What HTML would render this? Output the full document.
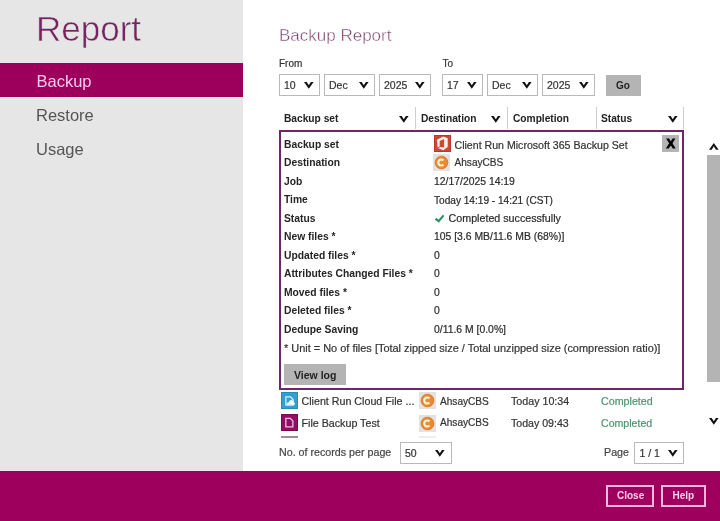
<!DOCTYPE html>
<html><head><meta charset="utf-8"><style>
html,body{margin:0;padding:0;width:720px;height:521px;overflow:hidden;background:#fff;position:relative}
.t{position:absolute;white-space:pre;font-family:"Liberation Sans",sans-serif}
#w{position:absolute;left:0;top:0;width:720px;height:521px;will-change:transform}
.a{position:absolute;display:block}
</style></head><body><div id="w">
<div class="a" style="left:0px;top:0px;width:243px;height:471px;background:#e6e6e6"></div>
<div class="t" style="left:36px;top:11px;font-size:35px;line-height:35px;color:#76235f;font-weight:400;-webkit-text-stroke:0.55px #e6e6e6">Report</div>
<div class="a" style="left:0px;top:63px;width:243px;height:34px;background:#9c005c"></div>
<div class="t" style="left:36.5px;top:73px;font-size:16.5px;line-height:16.5px;color:#f9c8ea;font-weight:400;">Backup</div>
<div class="t" style="left:36px;top:107px;font-size:16.5px;line-height:16.5px;color:#555;font-weight:400;">Restore</div>
<div class="t" style="left:36px;top:141px;font-size:16.5px;line-height:16.5px;color:#555;font-weight:400;">Usage</div>
<div class="t" style="left:279px;top:27px;font-size:17px;line-height:17px;color:#7c4272;font-weight:400;-webkit-text-stroke:0.4px #fff">Backup Report</div>
<div class="t" style="left:279px;top:59px;font-size:10px;line-height:10px;color:#333;font-weight:400;-webkit-text-stroke:0.2px #333">From</div>
<div class="t" style="left:442.5px;top:59px;font-size:10px;line-height:10px;color:#333;font-weight:400;-webkit-text-stroke:0.2px #333">To</div>
<div class="a" style="left:279px;top:74px;width:41px;height:21.5px;border:1px solid #b9b9b9;box-sizing:border-box;background:#fff"></div>
<div class="t" style="left:284px;top:80px;font-size:10.5px;line-height:10.5px;color:#333;font-weight:400;-webkit-text-stroke:0.2px #333">10</div>
<svg class="a" style="left:304.20px;top:82.10px" width="10.6" height="7.8"><path d="M0 0 H2.7 L4.8 3.13 L6.8999999999999995 0 H9.6 L4.8 6.8 Z" fill="#111"/></svg>
<div class="a" style="left:324px;top:74px;width:51px;height:21.5px;border:1px solid #b9b9b9;box-sizing:border-box;background:#fff"></div>
<div class="t" style="left:329px;top:80px;font-size:10.5px;line-height:10.5px;color:#333;font-weight:400;-webkit-text-stroke:0.2px #333">Dec</div>
<svg class="a" style="left:359.20px;top:82.10px" width="10.6" height="7.8"><path d="M0 0 H2.7 L4.8 3.13 L6.8999999999999995 0 H9.6 L4.8 6.8 Z" fill="#111"/></svg>
<div class="a" style="left:379px;top:74px;width:52px;height:21.5px;border:1px solid #b9b9b9;box-sizing:border-box;background:#fff"></div>
<div class="t" style="left:384px;top:80px;font-size:10.5px;line-height:10.5px;color:#333;font-weight:400;-webkit-text-stroke:0.2px #333">2025</div>
<svg class="a" style="left:415.20px;top:82.10px" width="10.6" height="7.8"><path d="M0 0 H2.7 L4.8 3.13 L6.8999999999999995 0 H9.6 L4.8 6.8 Z" fill="#111"/></svg>
<div class="a" style="left:442px;top:74px;width:41px;height:21.5px;border:1px solid #b9b9b9;box-sizing:border-box;background:#fff"></div>
<div class="t" style="left:447px;top:80px;font-size:10.5px;line-height:10.5px;color:#333;font-weight:400;-webkit-text-stroke:0.2px #333">17</div>
<svg class="a" style="left:467.20px;top:82.10px" width="10.6" height="7.8"><path d="M0 0 H2.7 L4.8 3.13 L6.8999999999999995 0 H9.6 L4.8 6.8 Z" fill="#111"/></svg>
<div class="a" style="left:487px;top:74px;width:51px;height:21.5px;border:1px solid #b9b9b9;box-sizing:border-box;background:#fff"></div>
<div class="t" style="left:492px;top:80px;font-size:10.5px;line-height:10.5px;color:#333;font-weight:400;-webkit-text-stroke:0.2px #333">Dec</div>
<svg class="a" style="left:522.20px;top:82.10px" width="10.6" height="7.8"><path d="M0 0 H2.7 L4.8 3.13 L6.8999999999999995 0 H9.6 L4.8 6.8 Z" fill="#111"/></svg>
<div class="a" style="left:542px;top:74px;width:53px;height:21.5px;border:1px solid #b9b9b9;box-sizing:border-box;background:#fff"></div>
<div class="t" style="left:547px;top:80px;font-size:10.5px;line-height:10.5px;color:#333;font-weight:400;-webkit-text-stroke:0.2px #333">2025</div>
<svg class="a" style="left:579.20px;top:82.10px" width="10.6" height="7.8"><path d="M0 0 H2.7 L4.8 3.13 L6.8999999999999995 0 H9.6 L4.8 6.8 Z" fill="#111"/></svg>
<div class="a" style="left:606px;top:75px;width:35px;height:21px;background:#b4b4b4"></div>
<div class="t" style="left:616px;top:81px;font-size:10px;line-height:10px;color:#222;font-weight:700;">Go</div>
<div class="t" style="left:284px;top:114px;font-size:10.2px;line-height:10.2px;color:#222;font-weight:700;">Backup set</div>
<svg class="a" style="left:399.20px;top:115.60px" width="10.6" height="7.8"><path d="M0 0 H2.7 L4.8 3.13 L6.8999999999999995 0 H9.6 L4.8 6.8 Z" fill="#111"/></svg>
<div class="a" style="left:414.5px;top:107px;width:1.2px;height:22px;background:#cfcfcf"></div>
<div class="t" style="left:421px;top:114px;font-size:10.2px;line-height:10.2px;color:#222;font-weight:700;">Destination</div>
<svg class="a" style="left:491.20px;top:115.60px" width="10.6" height="7.8"><path d="M0 0 H2.7 L4.8 3.13 L6.8999999999999995 0 H9.6 L4.8 6.8 Z" fill="#111"/></svg>
<div class="a" style="left:507px;top:107px;width:1.2px;height:22px;background:#cfcfcf"></div>
<div class="t" style="left:513px;top:114px;font-size:10.2px;line-height:10.2px;color:#222;font-weight:700;">Completion</div>
<div class="a" style="left:595.5px;top:107px;width:1.2px;height:22px;background:#cfcfcf"></div>
<div class="t" style="left:601px;top:114px;font-size:10.2px;line-height:10.2px;color:#222;font-weight:700;">Status</div>
<svg class="a" style="left:668.20px;top:115.60px" width="10.6" height="7.8"><path d="M0 0 H2.7 L4.8 3.13 L6.8999999999999995 0 H9.6 L4.8 6.8 Z" fill="#111"/></svg>
<div class="a" style="left:683px;top:107px;width:1.2px;height:22px;background:#cfcfcf"></div>
<div class="a" style="left:279px;top:130px;width:405px;height:260px;border:2px solid #70246a;box-sizing:border-box;background:#fff"></div>
<div class="t" style="left:284px;top:140px;font-size:10.3px;line-height:10.3px;color:#252525;font-weight:700;">Backup set</div>
<div class="t" style="left:284px;top:158px;font-size:10.3px;line-height:10.3px;color:#252525;font-weight:700;">Destination</div>
<div class="t" style="left:284px;top:177px;font-size:10.3px;line-height:10.3px;color:#252525;font-weight:700;">Job</div>
<div class="t" style="left:434px;top:177px;font-size:10.4px;line-height:10.4px;color:#2b2b2b;font-weight:400;-webkit-text-stroke:0.2px #2b2b2b">12/17/2025 14:19</div>
<div class="t" style="left:284px;top:195px;font-size:10.3px;line-height:10.3px;color:#252525;font-weight:700;">Time</div>
<div class="t" style="left:434px;top:196px;font-size:10.1px;line-height:10.1px;color:#2b2b2b;font-weight:400;-webkit-text-stroke:0.2px #2b2b2b">Today 14:19 - 14:21 (CST)</div>
<div class="t" style="left:284px;top:214px;font-size:10.3px;line-height:10.3px;color:#252525;font-weight:700;">Status</div>
<div class="t" style="left:284px;top:232px;font-size:10.3px;line-height:10.3px;color:#252525;font-weight:700;">New files *</div>
<div class="t" style="left:434px;top:232px;font-size:10.4px;line-height:10.4px;color:#2b2b2b;font-weight:400;-webkit-text-stroke:0.2px #2b2b2b">105 [3.6 MB/11.6 MB (68%)]</div>
<div class="t" style="left:284px;top:251px;font-size:10.3px;line-height:10.3px;color:#252525;font-weight:700;">Updated files *</div>
<div class="t" style="left:434px;top:251px;font-size:10.4px;line-height:10.4px;color:#2b2b2b;font-weight:400;-webkit-text-stroke:0.2px #2b2b2b">0</div>
<div class="t" style="left:284px;top:269px;font-size:10.3px;line-height:10.3px;color:#252525;font-weight:700;">Attributes Changed Files *</div>
<div class="t" style="left:434px;top:269px;font-size:10.4px;line-height:10.4px;color:#2b2b2b;font-weight:400;-webkit-text-stroke:0.2px #2b2b2b">0</div>
<div class="t" style="left:284px;top:288px;font-size:10.3px;line-height:10.3px;color:#252525;font-weight:700;">Moved files *</div>
<div class="t" style="left:434px;top:288px;font-size:10.4px;line-height:10.4px;color:#2b2b2b;font-weight:400;-webkit-text-stroke:0.2px #2b2b2b">0</div>
<div class="t" style="left:284px;top:306px;font-size:10.3px;line-height:10.3px;color:#252525;font-weight:700;">Deleted files *</div>
<div class="t" style="left:434px;top:306px;font-size:10.4px;line-height:10.4px;color:#2b2b2b;font-weight:400;-webkit-text-stroke:0.2px #2b2b2b">0</div>
<div class="t" style="left:284px;top:325px;font-size:10.3px;line-height:10.3px;color:#252525;font-weight:700;">Dedupe Saving</div>
<div class="t" style="left:434px;top:325px;font-size:10.4px;line-height:10.4px;color:#2b2b2b;font-weight:400;-webkit-text-stroke:0.2px #2b2b2b">0/11.6 M [0.0%]</div>
<div class="a" style="left:433.8px;top:135px;width:17px;height:17px;background:#cf4632;box-shadow:inset 0 0 0 1px #b8382a"></div>
<svg class="a" style="left:433.8px;top:135px" width="17" height="17"><path fill-rule="evenodd" d="M3 4.7 L9.3 1.4 L13.7 3.2 V12.1 L9.3 15.3 L3.7 12.9 Z M5.7 5.9 L10.1 4 V12.6 L5.7 11.9 Z" fill="#fdeee8"/><path d="M3.4 13 L5.9 11.8" stroke="#cf4632" stroke-width="1"/></svg>
<div class="t" style="left:454.5px;top:140px;font-size:10.6px;line-height:10.6px;color:#333;font-weight:400;-webkit-text-stroke:0.2px #333">Client Run Microsoft 365 Backup Set</div>
<div class="a" style="left:433px;top:153.5px;width:17px;height:17px;background:#e4e2e0"></div>
<svg class="a" style="left:433px;top:153.5px" width="17" height="17"><circle cx="8.5" cy="8.5" r="6.3" fill="#eb8a33" stroke="#dc7a2c" stroke-width="1"/><path d="M10.4 6.4 A3 3 0 1 0 10.4 10.6" fill="none" stroke="#fff2cf" stroke-width="2.2"/></svg>
<div class="t" style="left:454.5px;top:158px;font-size:10.1px;line-height:10.1px;color:#333;font-weight:400;-webkit-text-stroke:0.2px #333">AhsayCBS</div>
<svg class="a" style="left:434px;top:213px" width="11" height="10"><path d="M1.6 5.6 L4.6 8.2 L9.6 2.4" fill="none" stroke="#2e8c62" stroke-width="2.1"/></svg>
<div class="t" style="left:448.6px;top:213px;font-size:10.7px;line-height:10.7px;color:#2b2b2b;font-weight:400;-webkit-text-stroke:0.2px #2b2b2b">Completed successfully</div>
<div class="t" style="left:284px;top:343px;font-size:10.95px;line-height:10.95px;color:#333;font-weight:400;-webkit-text-stroke:0.2px #333">* Unit = No of files [Total zipped size / Total unzipped size (compression ratio)]</div>
<div class="a" style="left:662px;top:135px;width:17px;height:17px;background:#b4b4b4"></div>
<div class="t" style="left:666.6px;top:138px;font-size:12.8px;line-height:12.8px;color:#000;font-weight:700;-webkit-text-stroke:0.8px #000">X</div>
<div class="a" style="left:284px;top:364px;width:61.5px;height:21px;background:#b4b4b4"></div>
<div class="t" style="left:294px;top:370px;font-size:10.5px;line-height:10.5px;color:#222;font-weight:700;">View log</div>
<div class="a" style="left:281px;top:392px;width:17px;height:17px;background:#369dcf;box-shadow:inset 0 0 0 1px #2b8abb"></div>
<svg class="a" style="left:281px;top:392px" width="17" height="17"><path d="M4.9 4.9 H9.6 L12.3 8 V13 H4.9 Z" fill="none" stroke="#cdf5ff" stroke-width="1.3"/><path d="M5.8 12.4 Q5.8 10.3 7.7 10.2 Q8.4 7.9 10.6 8.1 Q12.3 8.5 12.5 10.3 Q14.1 10.5 14.1 12.4 Z" fill="#f4fdff"/></svg>
<div class="t" style="left:301.5px;top:396px;font-size:10.7px;line-height:10.7px;color:#333;font-weight:400;-webkit-text-stroke:0.2px #333">Client Run Cloud File ...</div>
<div class="a" style="left:419px;top:392px;width:17px;height:17px;background:#e4e2e0"></div>
<svg class="a" style="left:419px;top:392px" width="17" height="17"><circle cx="8.5" cy="8.5" r="6.3" fill="#eb8a33" stroke="#dc7a2c" stroke-width="1"/><path d="M10.4 6.4 A3 3 0 1 0 10.4 10.6" fill="none" stroke="#fff2cf" stroke-width="2.2"/></svg>
<div class="t" style="left:440px;top:397px;font-size:10.1px;line-height:10.1px;color:#333;font-weight:400;-webkit-text-stroke:0.2px #333">AhsayCBS</div>
<div class="t" style="left:511px;top:396px;font-size:10.7px;line-height:10.7px;color:#333;font-weight:400;-webkit-text-stroke:0.2px #333">Today 10:34</div>
<div class="t" style="left:601px;top:396px;font-size:10.7px;line-height:10.7px;color:#4a9272;font-weight:400;-webkit-text-stroke:0.2px #4a9272">Completed</div>
<div class="a" style="left:281px;top:414.4px;width:17px;height:17px;background:#920f62;box-shadow:inset 0 0 0 1px #7a0a50"></div>
<svg class="a" style="left:281px;top:414.4px" width="17" height="17"><path d="M4.85 4.45 H9.4 L11.85 6.9 V12.85 H4.85 Z" fill="none" stroke="#f7bde8" stroke-width="1.3"/></svg>
<div class="t" style="left:301.5px;top:418px;font-size:10.7px;line-height:10.7px;color:#333;font-weight:400;-webkit-text-stroke:0.2px #333">File Backup Test</div>
<div class="a" style="left:419px;top:414.5px;width:17px;height:17px;background:#e4e2e0"></div>
<svg class="a" style="left:419px;top:414.5px" width="17" height="17"><circle cx="8.5" cy="8.5" r="6.3" fill="#eb8a33" stroke="#dc7a2c" stroke-width="1"/><path d="M10.4 6.4 A3 3 0 1 0 10.4 10.6" fill="none" stroke="#fff2cf" stroke-width="2.2"/></svg>
<div class="t" style="left:440px;top:418px;font-size:10.1px;line-height:10.1px;color:#333;font-weight:400;-webkit-text-stroke:0.2px #333">AhsayCBS</div>
<div class="t" style="left:511px;top:418px;font-size:10.6px;line-height:10.6px;color:#333;font-weight:400;-webkit-text-stroke:0.2px #333">Today 09:43</div>
<div class="t" style="left:601px;top:418px;font-size:10.6px;line-height:10.6px;color:#4a9272;font-weight:400;-webkit-text-stroke:0.2px #4a9272">Completed</div>
<div class="a" style="left:281px;top:436px;width:17px;height:1.7px;background:#a28a9a"></div>
<div class="a" style="left:419px;top:436px;width:17px;height:2px;background:#eee"></div>
<svg class="a" style="left:708.70px;top:142.60px" width="10.6" height="7.8"><path d="M0 6.8 H2.7 L4.8 3.13 L6.8999999999999995 6.8 H9.6 L4.8 0 Z" fill="#111"/></svg>
<div class="a" style="left:707px;top:154.5px;width:13px;height:227px;background:#b4b4b4"></div>
<svg class="a" style="left:708.70px;top:417.60px" width="10.6" height="7.8"><path d="M0 0 H2.7 L4.8 3.13 L6.8999999999999995 0 H9.6 L4.8 6.8 Z" fill="#111"/></svg>
<div class="t" style="left:279px;top:447px;font-size:10.7px;line-height:10.7px;color:#444;font-weight:400;-webkit-text-stroke:0.2px #444">No. of records per page</div>
<div class="a" style="left:399.5px;top:441.5px;width:52px;height:22px;border:1px solid #b9b9b9;box-sizing:border-box;background:#fff"></div>
<div class="t" style="left:405px;top:448px;font-size:10.5px;line-height:10.5px;color:#333;font-weight:400;-webkit-text-stroke:0.2px #333">50</div>
<svg class="a" style="left:435.20px;top:449.60px" width="10.6" height="7.8"><path d="M0 0 H2.7 L4.8 3.13 L6.8999999999999995 0 H9.6 L4.8 6.8 Z" fill="#111"/></svg>
<div class="t" style="left:604px;top:447px;font-size:10.7px;line-height:10.7px;color:#444;font-weight:400;-webkit-text-stroke:0.2px #444">Page</div>
<div class="a" style="left:634px;top:441.5px;width:50px;height:22px;border:1px solid #b9b9b9;box-sizing:border-box;background:#fff"></div>
<div class="t" style="left:639.5px;top:448px;font-size:10.5px;line-height:10.5px;color:#333;font-weight:400;-webkit-text-stroke:0.2px #333">1 / 1</div>
<svg class="a" style="left:667.70px;top:449.60px" width="10.6" height="7.8"><path d="M0 0 H2.7 L4.8 3.13 L6.8999999999999995 0 H9.6 L4.8 6.8 Z" fill="#111"/></svg>
<div class="a" style="left:0px;top:470.5px;width:720px;height:50.5px;background:#9e005d"></div>
<div class="a" style="left:606px;top:485px;width:48px;height:22px;border:2px solid #f7b6e2;box-sizing:border-box"></div>
<div class="t" style="left:617px;top:491px;font-size:10px;line-height:10px;color:#f9cdec;font-weight:700;">Close</div>
<div class="a" style="left:661px;top:485px;width:45px;height:22px;border:2px solid #f7b6e2;box-sizing:border-box"></div>
<div class="t" style="left:672.5px;top:491px;font-size:10px;line-height:10px;color:#f9cdec;font-weight:700;">Help</div>
</div></body></html>
